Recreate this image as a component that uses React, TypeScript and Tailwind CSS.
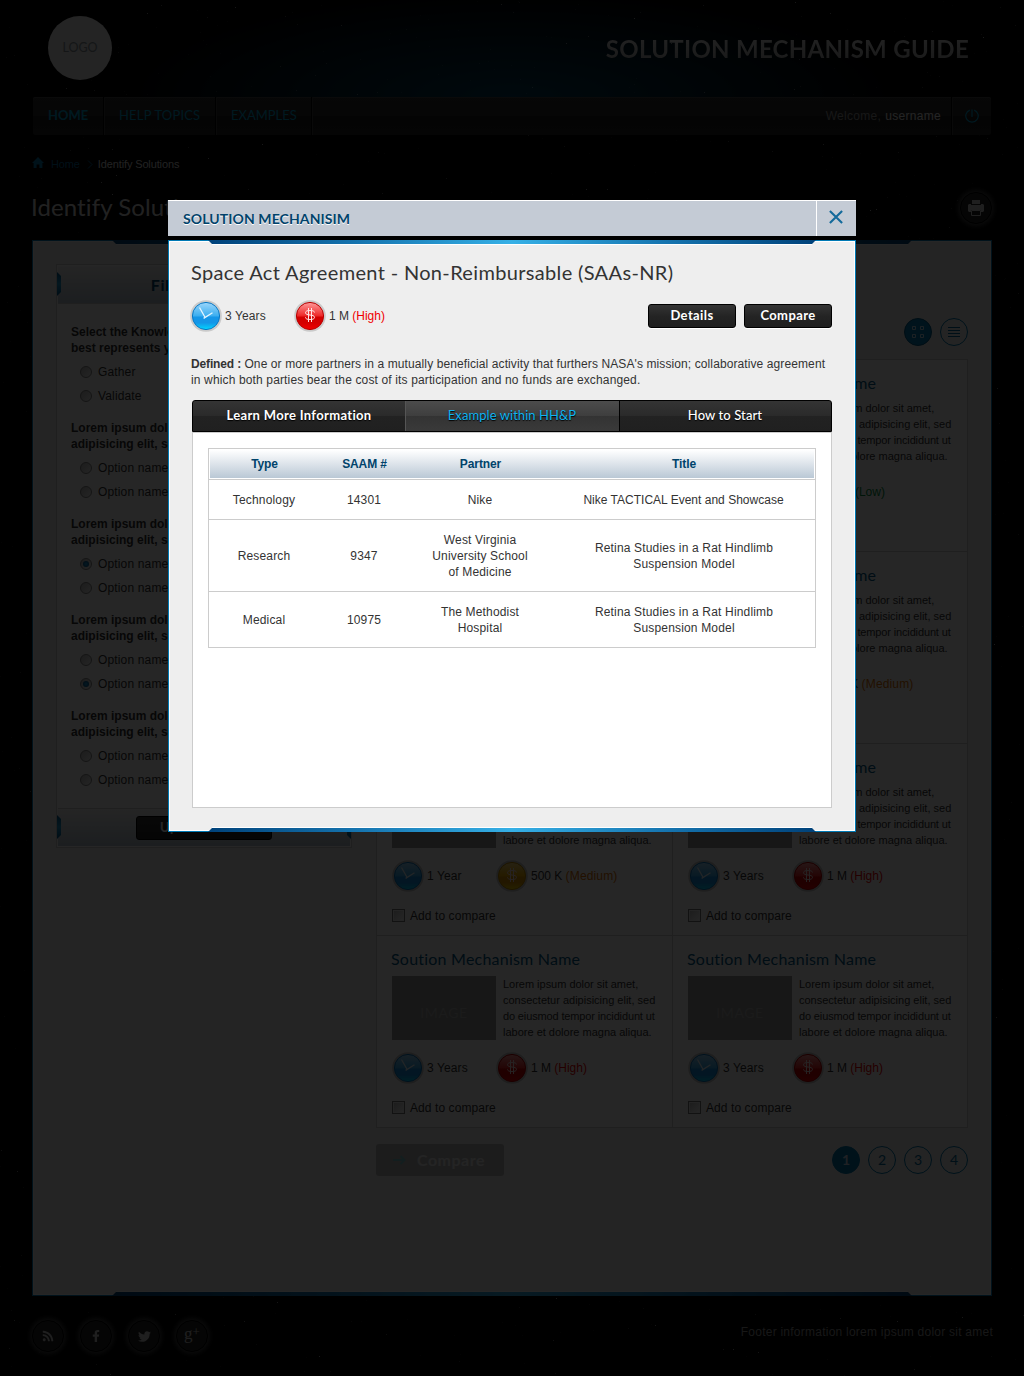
import React from "react";
import { FaRss, FaFacebookF, FaTwitter } from "react-icons/fa";

const avenir = "font-['Lato',sans-serif]";

type Tone = "blue" | "red" | "gold" | "green";

const TONES: Record<Tone, string[]> = {
  blue: ["#9bd6fb", "#3fb0f0", "#1496e8", "#00d8ff", "#0a78c4"],
  red: ["#ff9a9a", "#ee2b2b", "#d40000", "#f40000", "#b80000"],
  gold: ["#ffdf80", "#f4b400", "#e39c00", "#ffe000", "#c08a00"],
  green: ["#9be89b", "#2fc43f", "#109c22", "#30e040", "#0a8018"],
};

function Orb({ tone }: { tone: Tone }) {
  const [top, mid, low, bottom, edge] = TONES[tone];
  const id = `orb-${tone}`;
  return (
    <svg width="32" height="32" viewBox="0 0 32 32" className="shrink-0">
      <defs>
        <linearGradient id={id} x1="0" y1="0" x2="0" y2="1">
          <stop offset="0" stopColor={top} />
          <stop offset="0.48" stopColor={mid} />
          <stop offset="0.55" stopColor={low} />
          <stop offset="0.75" stopColor={low} />
          <stop offset="1" stopColor={bottom} />
        </linearGradient>
      </defs>
      <circle cx="16" cy="16" r="15.8" fill="#cacaca" />
      <circle cx="16" cy="16" r="13.6" fill={`url(#${id})`} stroke={edge} strokeWidth="1" />
      {tone === "blue" ? (
        <path d="M9.500 7.500 15 17.200M13.600 18.400 22.500 12.800" stroke="#e6f6ff" strokeWidth="1.3" fill="none" />
      ) : (
        <path
          d="M20.500 12.500C20.500 11 18.500 10.500 16 10.500s-4.500.5-4.500 2.300C11.500 16 20.500 14 20.500 17.300c0 1.700-1.900 2.200-4.500 2.200s-4.500-.6-4.500-2.200M14.500 8v14M17.500 8v14"
          stroke="#ffe3e3"
          strokeWidth="1"
          fill="none"
        />
      )}
    </svg>
  );
}

function Stars() {
  let seed = 7;
  const rand = () => {
    seed = (seed * 16807) % 2147483647;
    return seed / 2147483647;
  };
  const dots = Array.from({ length: 1500 }, () => ({
    x: Math.floor(rand() * 1024),
    y: Math.floor(rand() * 1376),
    o: 0.08 + Math.pow(rand(), 5) * 0.6,
  }));
  return (
    <svg className="absolute inset-0" width="1024" height="1376">
      {dots.map((d, i) => (
        <rect key={i} x={d.x} y={d.y} width="1" height="1" fill="#fff" opacity={d.o} />
      ))}
    </svg>
  );
}

function FrameBars() {
  const c =
    "absolute h-1 bg-[linear-gradient(90deg,#00427a,#1675b0_25%,#36b0e6_50%,#1675b0_75%,#00427a)]";
  return (
    <>
      <div className={`${c} -top-px left-[var(--inset)] right-[var(--inset)] [clip-path:polygon(0_0,100%_0,calc(100%-4px)_100%,4px_100%)]`} />
      <div className={`${c} -bottom-px left-[var(--inset)] right-[var(--inset)] [clip-path:polygon(4px_0,calc(100%-4px)_0,100%_100%,0_100%)]`} />
      <div className="absolute top-[3px] right-[calc(var(--inset)+4px)] left-[calc(var(--inset)+4px)] h-px bg-white" />
      <div className="absolute right-[calc(var(--inset)+4px)] bottom-[3px] left-[calc(var(--inset)+4px)] h-px bg-white" />
    </>
  );
}

function Metrics({ years, cost, level }: { years: string; cost: string; level: "High" | "Medium" | "Low" }) {
  const tone: Tone = level === "High" ? "red" : level === "Medium" ? "gold" : "green";
  const color = level === "High" ? "text-[#f00000]" : level === "Medium" ? "text-[#e07000] tracking-[0.15px]" : "text-[#009040]";
  return (
    <div className="flex h-8 items-center text-[12px] leading-4 tracking-[0.1px]">
      <div className="flex w-[104px] items-center gap-[3px]">
        <Orb tone="blue" />
        <span>{years}</span>
      </div>
      <div className="flex items-center gap-[3px]">
        <Orb tone={tone} />
        <span className="whitespace-nowrap tracking-[-0.02px]">
          {cost} <span className={color}>({level})</span>
        </span>
      </div>
    </div>
  );
}

type CardData = { years: string; cost: string; level: "High" | "Medium" | "Low" };

const CARDS: CardData[] = [
  { years: "3 Years", cost: "1 M", level: "High" },
  { years: "1 Year", cost: "50 K", level: "Low" },
  { years: "3 Years", cost: "1 M", level: "High" },
  { years: "1 Year", cost: "500 K", level: "Medium" },
  { years: "1 Year", cost: "500 K", level: "Medium" },
  { years: "3 Years", cost: "1 M", level: "High" },
  { years: "3 Years", cost: "1 M", level: "High" },
  { years: "3 Years", cost: "1 M", level: "High" },
];

function Card({ data }: { data: CardData }) {
  return (
    <div className="h-48 border-r border-b border-[#ccc] bg-white pl-[15px]">
      <h3 className={`${avenir} -ml-px h-10 pt-[11px] text-[16px] leading-6 tracking-[0.22px] text-[#005a87]`}>Soution Mechanism Name</h3>
      <div className="flex gap-[7px]">
        <div className={`${avenir} flex h-16 w-[104px] items-center justify-center bg-[#999] pt-2 text-[14px] tracking-[0.6px] text-[#b4b4b4]`}>IMAGE</div>
        <p className="text-[11px] leading-4 whitespace-nowrap">
          <span className="block tracking-[-0.02px]">Lorem ipsum dolor sit amet,</span>
          <span className="block">consectetur adipisicing elit, sed</span>
          <span className="block tracking-[-0.14px]">do eiusmod tempor incididunt ut</span>
          <span className="block">labore et dolore magna aliqua.</span>
        </p>
      </div>
      <div className="mt-3">
        <Metrics {...data} />
      </div>
      <div className="mt-[15px] flex h-4 items-center gap-[5px] pt-px text-[12px] leading-4 tracking-[0.08px]">
        <span className="h-[13px] w-[13px] border border-[#777] bg-[linear-gradient(135deg,#bbb,#fff)] shadow-[inset_0_0_0_1px_#eee]" />
        Add to compare
      </div>
    </div>
  );
}

function RadioRow({ label, checked }: { label: string; checked?: boolean }) {
  return (
    <div className="flex h-6 items-center gap-[6px] pl-[9px] text-[12px] tracking-[0.15px]">
      <span className="flex h-3 w-3 items-center justify-center rounded-full border border-[#8a8a8a] bg-[linear-gradient(135deg,#bbb,#f4f4f4)]">
        {checked && <span className="h-[6px] w-[6px] rounded-full bg-[radial-gradient(circle,#20a0e0,#004a78)]" />}
      </span>
      {label}
    </div>
  );
}

const GROUPS: { q: string; opts: [string, boolean][] }[] = [
  { q: "Select the Knowledge type that\nbest represents your need", opts: [["Gather", false], ["Validate", false]] },
  { q: "Lorem ipsum dolor sit amet,\nadipisicing elit, sed do eiusmod", opts: [["Option name", false], ["Option name", false]] },
  { q: "Lorem ipsum dolor sit amet,\nadipisicing elit, sed do eiusmod", opts: [["Option name", true], ["Option name", false]] },
  { q: "Lorem ipsum dolor sit amet,\nadipisicing elit, sed do eiusmod", opts: [["Option name", false], ["Option name", true]] },
  { q: "Lorem ipsum dolor sit amet,\nadipisicing elit, sed do eiusmod", opts: [["Option name", false], ["Option name", false]] },
];

function SideTabs() {
  return (
    <>
      <span className="absolute top-[6px] -left-px h-6 w-1 bg-[linear-gradient(#005a90,#209ad0,#005a90)] [clip-path:polygon(0_0,100%_4px,100%_calc(100%-4px),0_100%)]" />
      <span className="absolute top-[6px] -right-px h-6 w-1 bg-[linear-gradient(#005a90,#209ad0,#005a90)] [clip-path:polygon(100%_0,0_4px,0_calc(100%-4px),100%_100%)]" />
    </>
  );
}

function Sidebar() {
  return (
    <aside className="h-[584px] w-[296px] border border-[#ccc] bg-white">
      <div className={`${avenir} relative m-px flex h-[38px] items-center justify-center border-b border-[#ccc] bg-[linear-gradient(#f4f4f4,#b9c8d4)] text-[16px] font-bold tracking-[0.6px] text-[#00436b]`}>
        <SideTabs />
        Filter Options
      </div>
      <div className="h-[503px] pt-[19px] pl-[14px]">
        {GROUPS.map((g, i) => (
          <div key={i} className="h-24">
            <p className="text-[12px] leading-4 font-bold whitespace-pre">{g.q}</p>
            <div className="pt-1">
              {g.opts.map(([l, c], j) => (
                <RadioRow key={j} label={l} checked={c} />
              ))}
            </div>
          </div>
        ))}
      </div>
      <div className="relative mx-px flex h-[38px] items-center justify-center border-t border-[#ccc] bg-[linear-gradient(#f4f4f4,#b9c8d4)]">
        <SideTabs />
        <button className={`${avenir} h-6 w-[136px] rounded-[3px] border border-black bg-[linear-gradient(#333,#222)] text-[13px] leading-none font-bold tracking-[0.5px] text-white`}>
          Update Result
        </button>
      </div>
    </aside>
  );
}

function CircleIcon({ children }: { children: React.ReactNode }) {
  return (
    <span className="flex h-8 w-8 items-center justify-center rounded-full border border-black bg-[#262626] text-[#ccc] shadow-[0_0_5px_2px_#444]">
      {children}
    </span>
  );
}

function Page() {
  const navItem = "flex items-center border-r border-black pl-[15px] shadow-[1px_0_0_#404040]";
  return (
    <div className="relative h-[1376px] w-[1024px] bg-black text-[#333]">
      <div className="absolute top-0 left-0 h-[97px] w-full bg-[radial-gradient(ellipse_400px_110px_at_50%_100%,#003c58,transparent)]" />
      <Stars />
      <div className="relative mx-8">
        <header className="flex h-24 items-center justify-between pr-[23px] pl-4">
          <div className={`${avenir} flex h-16 w-16 items-center justify-center rounded-full bg-[#eee] pt-px text-[12.5px] text-[#8a969c]`}>LOGO</div>
          <div className={`${avenir} bg-[linear-gradient(#f4f4f4,#a0a0a0)] bg-clip-text pt-[2px] text-[24px] font-bold tracking-[0.28px] text-transparent`}>
            SOLUTION MECHANISM GUIDE
          </div>
        </header>
        <nav className={`${avenir} mt-px mx-px flex h-[38px] rounded-[2px] bg-[linear-gradient(#2e2e2e,#2a2a2a_50%,#1e1e1e_51%,#222)] text-[13px] text-[#00a5d8] shadow-[inset_0_1px_0_#444]`}>
          <span className={`${navItem} w-[71px] font-bold`}>HOME</span>
          <span className={`${navItem} w-[112px] tracking-[0.18px]`}>HELP TOPICS</span>
          <span className={`${navItem} w-[96px]`}>EXAMPLES</span>
          <span className="flex flex-1 items-center justify-end gap-1 border-r border-black pr-[10px] font-['Liberation_Sans',sans-serif] text-[12px] tracking-[0.3px] text-[#999] shadow-[1px_0_0_#404040]">
            Welcome, <span className="text-[#eee]">username</span>
          </span>
          <span className="flex w-[39px] items-center justify-center">
            <svg width="14" height="14" viewBox="0 0 14 14" fill="none" stroke="#00a5d8" strokeWidth="1.200">
              <path d="M4.800 1.100a6.200 6.200 0 1 0 4.400 0M7 .4V8" />
            </svg>
          </span>
        </nav>
        <div className="flex h-14 items-center pt-[3px] text-[11px] tracking-[-0.13px] text-[#00699c]">
          <svg width="12" height="11" viewBox="0 0 12 11" className="-mt-[5px]" fill="#0079b0">
            <path d="M6 0 0 6h1.600v5h3V7.400h2.800V11h3V6H12z" />
          </svg>
          <span className="ml-[7px]">Home</span>
          <svg width="6" height="9" viewBox="0 0 6 9" fill="none" stroke="#00699c" className="mr-[5px] ml-[7px]">
            <path d="m1 .5 4 4-4 4" />
          </svg>
          <span className="text-[#ddd]">Identify Solutions</span>
        </div>
        <div className="flex h-[49px] justify-between">
          <h1 className={`${avenir} -ml-px text-[24px] leading-8 tracking-[0.1px] text-[#ddd]`}>Identify Solutions</h1>
          <span className="pt-px">
            <CircleIcon>
              <svg width="16" height="16" viewBox="0 0 16 16" fill="#ccc">
                <path d="M4 0h8v4H4zM1 4h2v1h10V4h2l1 1v6l-1 1h-2v-2H3v2H1l-1-1V5z" />
                <path d="M3.500 10.500h9v5h-9z" fill="#262626" stroke="#ccc" />
              </svg>
            </CircleIcon>
          </span>
        </div>
        <main className="relative flex h-[1056px] gap-6 border border-[#007ab5] bg-[#eee] pt-[23px] pl-[23px] shadow-[inset_0_0_0_1px_#fff] [--inset:79px]">
          <FrameBars />
          <Sidebar />
          <section className="w-[592px]">
            <div className="flex h-[95px] items-end justify-end gap-2 pb-[13px]">
              <span className="flex h-7 w-7 items-center justify-center rounded-full border border-[#005a87] bg-[#0080b8]">
                <svg width="12" height="12" viewBox="0 0 12 12" fill="none" stroke="#bde">
                  <path d="M.5.5h3v3h-3zM8.500.5h3v3h-3zM.5 8.500h3v3h-3zM8.500 8.500h3v3h-3z" />
                </svg>
              </span>
              <span className="flex h-7 w-7 items-center justify-center rounded-full border border-[#0079b0]">
                <svg width="12" height="10" viewBox="0 0 12 10" stroke="#00699c">
                  <path d="M0 .5h12M0 3.500h12M0 6.500h12M0 9.500h12" />
                </svg>
              </span>
            </div>
            <div className="grid grid-cols-[296px_295px] border-t border-l border-[#ccc]">
              {CARDS.map((c, i) => (
                <Card key={i} data={c} />
              ))}
            </div>
            <div className="mt-4 flex items-start justify-between">
              <button className={`${avenir} flex h-8 w-32 items-center rounded-[3px] bg-[#bcbcbc] pl-[17px] text-[16px] leading-none font-bold tracking-[0.5px] text-[#f0f0f0]`}>
                <svg width="14" height="10" viewBox="0 0 14 10" fill="none" stroke="#80c8cc" strokeWidth="2" className="mr-[10px]">
                  <path d="M0 5h11M7.500 1l4 4-4 4" />
                </svg>
                Compare
              </button>
              <div className={`${avenir} flex gap-2 pt-[2px] text-[14px] text-[#00699c]`}>
                {["1", "2", "3", "4"].map((n) => (
                  <span
                    key={n}
                    className={`flex h-7 w-7 items-center justify-center rounded-full border border-[#0079b0] pb-px ${n === "1" ? "bg-[#007ab0] font-bold text-[#cde]" : ""}`}
                  >
                    {n}
                  </span>
                ))}
              </div>
            </div>
          </section>
        </main>
        <footer className="flex justify-between pt-6">
          <div className="flex gap-4">
            <CircleIcon><FaRss size={12} /></CircleIcon>
            <CircleIcon><FaFacebookF size={12} /></CircleIcon>
            <CircleIcon><FaTwitter size={13} /></CircleIcon>
            <CircleIcon>
              <span className="-mt-1 flex items-start font-['Liberation_Serif',serif] text-[17px] leading-4">
                g<span className="text-[13px] leading-[11px]">+</span>
              </span>
            </CircleIcon>
          </div>
          <span className="-mr-px pt-1 text-[12px] leading-4 tracking-[0.24px] text-[#999]">Footer information lorem ipsum dolor sit amet</span>
        </footer>
      </div>
    </div>
  );
}

const ROWS = [
  { h: "h-10", cells: ["Technology", "14301", "Nike", "Nike TACTICAL Event and Showcase"] },
  { h: "h-[72px]", cells: ["Research", "9347", "West Virginia\nUniversity School\nof Medicine", "Retina Studies in a Rat Hindlimb\nSuspension Model"] },
  { h: "h-14", cells: ["Medical", "10975", "The Methodist\nHospital", "Retina Studies in a Rat Hindlimb\nSuspension Model"] },
];

function Modal() {
  const cols = "grid grid-cols-[110px_90px_142px_1fr] items-center text-center";
  const tab = "flex items-center justify-center [text-shadow:0_1px_1px_#000]";
  const btn = `${avenir} h-6 w-[88px] rounded-[3px] border border-black bg-[linear-gradient(#343434,#242424_50%,#1f1f1f)] pb-[2px] text-[13px] leading-none font-bold tracking-[0.4px] text-white shadow-[0_1px_0_#fff]`;
  return (
    <div className="absolute top-[200px] left-[168px] w-[688px] text-[12px] leading-4 text-[#333]">
      <div className="flex h-9 border-t border-white bg-[#c4cbd5]">
        <div className={`${avenir} flex flex-1 items-center pt-px pl-[15px] text-[14px] font-bold tracking-[0.1px] text-[#00436b] [text-shadow:0_1px_0_#fff]`}>SOLUTION MECHANISIM</div>
        <button className="flex w-10 items-start justify-center border-l border-white pt-[9px] pr-[2px]">
          <svg width="14" height="14" viewBox="0 0 14 14" stroke="#136a9b" strokeWidth="2.100">
            <path d="m.9.900 12.200 12.200M13.100.900.9 13.100" />
          </svg>
        </button>
      </div>
      <div className="h-1 bg-black" />
      <div className="relative h-[592px] border border-[#007ab5] bg-[#eee] px-[23px] shadow-[inset_0_0_0_1px_#fff] [--inset:39px]">
        <FrameBars />
        <h2 className={`${avenir} -ml-px h-[45px] pt-[19px] text-[20px] leading-6 tracking-[0.34px] whitespace-nowrap`}>Space Act Agreement - Non-Reimbursable (SAAs-NR)</h2>
        <div className="mt-[14px] -ml-[2px] flex items-center justify-between">
          <Metrics years="3 Years" cost="1 M" level="High" />
          <div className="flex gap-2">
            <button className={btn}>Details</button>
            <button className={btn}>Compare</button>
          </div>
        </div>
        <p className="mt-6 -ml-px whitespace-pre tracking-[0.1px]">
          <b className="tracking-[-0.15px]">Defined :</b>
          {" One or more partners in a mutually beneficial activity that furthers NASA's mission; collaborative agreement\n"}
          <span className="tracking-[0.14px]">in which both parties bear the cost of its participation and no funds are exchanged.</span>
        </p>
        <div className={`${avenir} mt-3 grid h-8 grid-cols-[212px_215px_1fr] rounded-t-[3px] border border-black bg-[linear-gradient(#343434,#2a2a2a_50%,#222_51%,#202020)] text-[13px] text-white`}>
          <span className={`${tab} pb-[2px] font-bold tracking-[0.33px]`}>Learn More Information</span>
          <span className={`${tab} border-r border-l border-r-black border-l-[#555] bg-[linear-gradient(#4c4c4c,#3e3e3e_50%,#333_51%,#3a3a3a)] pr-px pb-[2px] tracking-[0.06px] text-[#12b4f0]`}>Example within HH&amp;P</span>
          <span className={`${tab} pr-px pb-[2px] font-medium tracking-[0.1px]`}>How to Start</span>
        </div>
        <div className="h-[376px] border border-[#ccc] bg-white p-[15px]">
          <div className="border border-[#ccc]">
            <div className={`${cols} h-[30px] border border-white bg-[linear-gradient(#fff,#bac8d5)] font-bold tracking-[-0.1px] text-[#00436b]`}>
              <span className="pr-px">Type</span>
              <span className="pr-px">SAAM #</span>
              <span className="pr-px">Partner</span>
              <span className="pl-[2px]">Title</span>
            </div>
            {ROWS.map((r, i) => (
              <div key={i} className={`${cols} ${r.h} border-t border-[#ccc] tracking-[0.17px] whitespace-pre`}>
                {r.cells.map((c, j) => (
                  <span key={j} className={i === 0 && j === 3 ? "pl-px tracking-[0.01px]" : j === 3 ? "pl-[2px]" : ""}>{c}</span>
                ))}
              </div>
            ))}
          </div>
        </div>
      </div>
    </div>
  );
}

export default function App() {
  return (
    <div className="relative h-[1376px] w-[1024px] overflow-hidden bg-black font-['Liberation_Sans',Arial,sans-serif]">
      <Page />
      <div className="absolute inset-0 bg-black/85" />
      <Modal />
    </div>
  );
}
